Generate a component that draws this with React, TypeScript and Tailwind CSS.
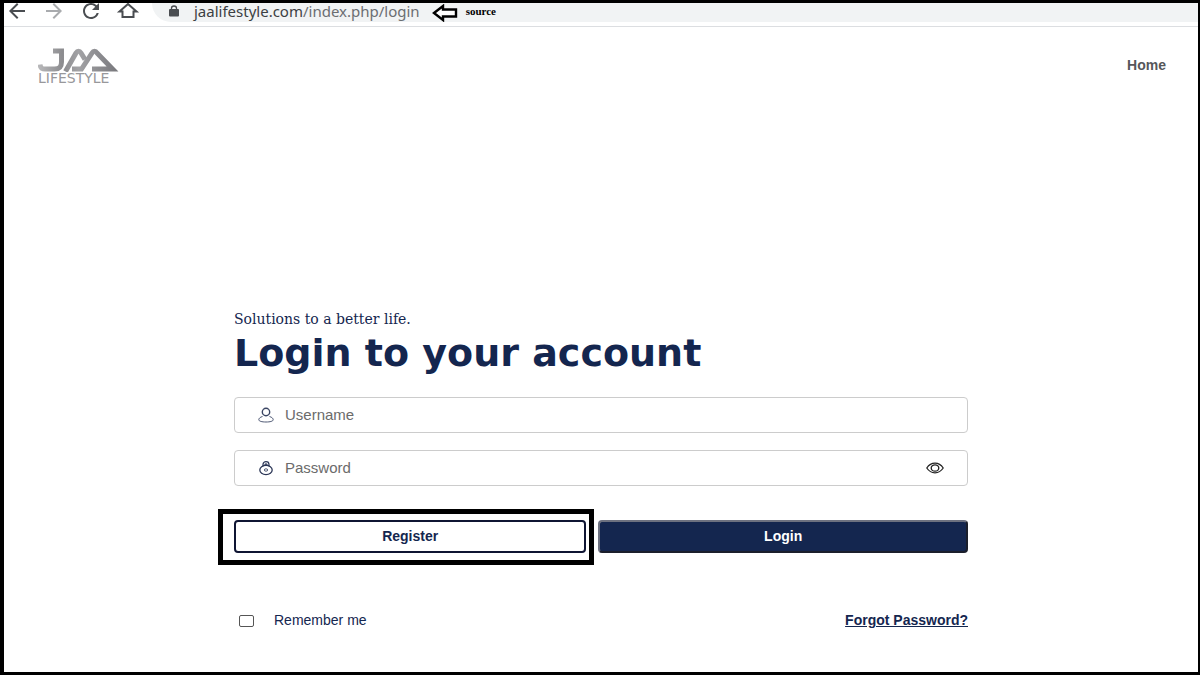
import { useState } from 'react';
import { MdArrowBack, MdArrowForward, MdRefresh } from 'react-icons/md';

function HouseIcon() {
  return (
    <svg width="24" height="24" viewBox="0 0 24 24" fill="none" stroke="currentColor" strokeWidth="2">
      <path d="M3.500 12.500 12 5l8.500 7.500H17.500V18h-11v-5.500Z" />
    </svg>
  );
}

function LockIcon() {
  return (
    <svg className="shrink-0" width="12" height="12" viewBox="0 0 12 12" fill="#4a4d51">
      <rect x="1" y="4" width="10" height="7.500" rx="1" />
      <path d="M3.500 4.500V3.200a2.500 2.200 0 0 1 5 0v1.300" fill="none" stroke="#4a4d51" strokeWidth="1.300" />
    </svg>
  );
}

function BrowserBar() {
  return (
    <div className="flex h-6 items-start border-b border-[#dcdee1] bg-white pl-px">
      <nav aria-label="Browser" className="flex h-4 shrink-0 items-center gap-[13px] text-[#4a4d51]">
        <button type="button" aria-label="Back">
          <MdArrowBack size={24} />
        </button>
        <button type="button" aria-label="Forward" className="text-[#a9abae]">
          <MdArrowForward size={24} />
        </button>
        <button type="button" aria-label="Reload">
          <MdRefresh size={24} />
        </button>
        <button type="button" aria-label="Home page">
          <HouseIcon />
        </button>
      </nav>
      <div className="ml-3 flex h-[19px] flex-1 items-center rounded-bl-full bg-[#f1f3f4] pb-1 pl-4">
        <LockIcon />
        <p className="ml-3.5 font-['Noto_Sans',sans-serif] text-[15px] leading-4 text-[#6b6e72]">
          <span className="text-[#3c4043]">jaalifestyle.com</span>/index.php/login
        </p>
        <svg className="mt-1 ml-3 shrink-0" width="26" height="18" viewBox="0 0 26 18" fill="#fff" stroke="#000" strokeWidth="2.4">
          <path d="M2 9 11 2v3.500h13v7H11V16Z" />
        </svg>
        <span className="ml-2 font-['Liberation_Serif',serif] text-[11px] leading-4 font-bold text-black">source</span>
      </div>
    </div>
  );
}

function Logo() {
  return (
    <a href="#" aria-label="JAA Lifestyle" className="block w-20">
      <svg className="block" width="81" height="24" viewBox="0 0 81 24" fill="none" stroke="url(#silver)" strokeWidth="5">
        <defs>
          <linearGradient id="silver" gradientUnits="userSpaceOnUse" x1="0" y1="0" x2="81" y2="0">
            <stop offset="0" stopColor="#b9b9bb" />
            <stop offset="0.3" stopColor="#8c8c8f" />
            <stop offset="0.5" stopColor="#a2a2a5" />
            <stop offset="1" stopColor="#77777b" />
          </linearGradient>
        </defs>
        <path d="M15 3h8.500V14c0 5-2 7-7 7H7c-3 0-4.500-1-5-4.500" />
        <path d="M27.500 23.500 38 5c1.500-2.500 3.500-2.500 5 0l4 6.500" />
        <path d="M34 21h9.500L54 5c1.500-2.500 3.500-2.500 5 0L74.500 21H54" />
      </svg>
      <span className="block font-['DejaVu_Sans',sans-serif] text-[14px] leading-3 text-[#98989b]">LIFESTYLE</span>
    </a>
  );
}

function UserIcon() {
  return (
    <svg width="16" height="16" viewBox="0 0 16 16" fill="none" stroke="#3b4664">
      <circle cx="8" cy="5" r="3.700" strokeWidth="1.400" />
      <path d="M4.500 9.500C2 10.200.8 11.500.8 12.700c0 1.500 3 2.300 7.200 2.300s7.200-.8 7.200-2.300c0-1.200-1.200-2.500-3.700-3.200" strokeWidth="0.900" />
    </svg>
  );
}

function PasswordIcon() {
  return (
    <svg width="16" height="16" viewBox="0 0 16 16" fill="none" stroke="#2b3656">
      <ellipse cx="8" cy="10" rx="6.200" ry="4.600" strokeWidth="1.300" />
      <path d="M5 6.500V4.500a3 2.800 0 0 1 6 0v2M7 6V4.800a1 1 0 0 1 2 0V6" strokeWidth="1.200" />
      <ellipse cx="8" cy="10" rx="1.700" ry="1.200" strokeWidth="0.800" />
    </svg>
  );
}

function EyeIcon() {
  return (
    <svg width="18" height="12" viewBox="0 0 18 12" fill="none" stroke="#222" strokeWidth="1.300">
      <path d="M.8 6C3 2.700 5.800 1.200 9 1.200S15 2.700 17.200 6C15 9.300 12.200 10.800 9 10.800S3 9.300.8 6Z" />
      <ellipse cx="9" cy="6" rx="3.800" ry="3.200" />
    </svg>
  );
}

export default function App() {
  const [showPassword, setShowPassword] = useState(false);

  return (
    <div className="flex min-h-screen flex-col overflow-hidden border-t-3 border-r-2 border-b-3 border-l-4 border-black bg-white font-['Liberation_Sans',Arial,sans-serif] text-[14px] text-[#14264f]">
      <BrowserBar />

      <header className="flex items-start justify-between px-8 pt-[21px] pl-[34px]">
        <Logo />
        <a href="#" className="mt-[7px] leading-5 font-bold text-[#55565a]">Home</a>
      </header>

      <main className="mx-auto mt-[225px] w-full max-w-[734px]">
        <p className="font-['DejaVu_Serif',serif] text-[14px] leading-5">Solutions to a better life.</p>
        <h1 className="mt-1.5 font-['DejaVu_Sans',sans-serif] text-[38px] leading-9 font-bold">Login to your account</h1>

        <form className="mt-[26px]" onSubmit={(e) => e.preventDefault()}>
          <div className="flex h-9 items-center rounded-sm border border-[#ccc] px-[23px]">
            <label htmlFor="username" aria-label="Username">
              <UserIcon />
            </label>
            <input
              id="username"
              type="text"
              placeholder="Username"
              className="ml-[11px] min-w-0 flex-1 text-[15px] outline-none placeholder:text-[#6b6b6b]"
            />
          </div>

          <div className="mt-[17px] flex h-9 items-center rounded-sm border border-[#ccc] px-[23px]">
            <label htmlFor="password" aria-label="Password">
              <PasswordIcon />
            </label>
            <input
              id="password"
              type={showPassword ? 'text' : 'password'}
              placeholder="Password"
              className="ml-[11px] min-w-0 flex-1 text-[15px] outline-none placeholder:text-[#6b6b6b]"
            />
            <button type="button" aria-label="Show password" onClick={() => setShowPassword(!showPassword)}>
              <EyeIcon />
            </button>
          </div>

          <div className="mt-[34px] flex gap-3">
            <div className="relative w-[48%]">
              <button type="button" className="h-[33px] w-full rounded-sm border-2 border-[#0f1533] bg-white font-bold">
                Register
              </button>
              {/* marker box round the register button */}
              <div className="pointer-events-none absolute -top-[11px] -right-2 -bottom-3 -left-4 border-5 border-black" />
            </div>
            <button
              type="submit"
              className="h-[33px] flex-1 rounded-sm border-2 border-[#1b1f2c] border-t-[#6d7180] border-l-[#6d7180] bg-[#14264f] font-bold text-white"
            >
              Login
            </button>
          </div>

          <div className="mt-[57px] flex items-center justify-between pl-[5px]">
            <label className="flex items-center gap-5">
              <input type="checkbox" className="h-3 w-[15px] appearance-none rounded-xs border border-[#555] bg-white checked:bg-[#14264f]" />
              Remember me
            </label>
            <a href="#" className="font-bold underline">Forgot Password?</a>
          </div>
        </form>
      </main>
    </div>
  );
}
